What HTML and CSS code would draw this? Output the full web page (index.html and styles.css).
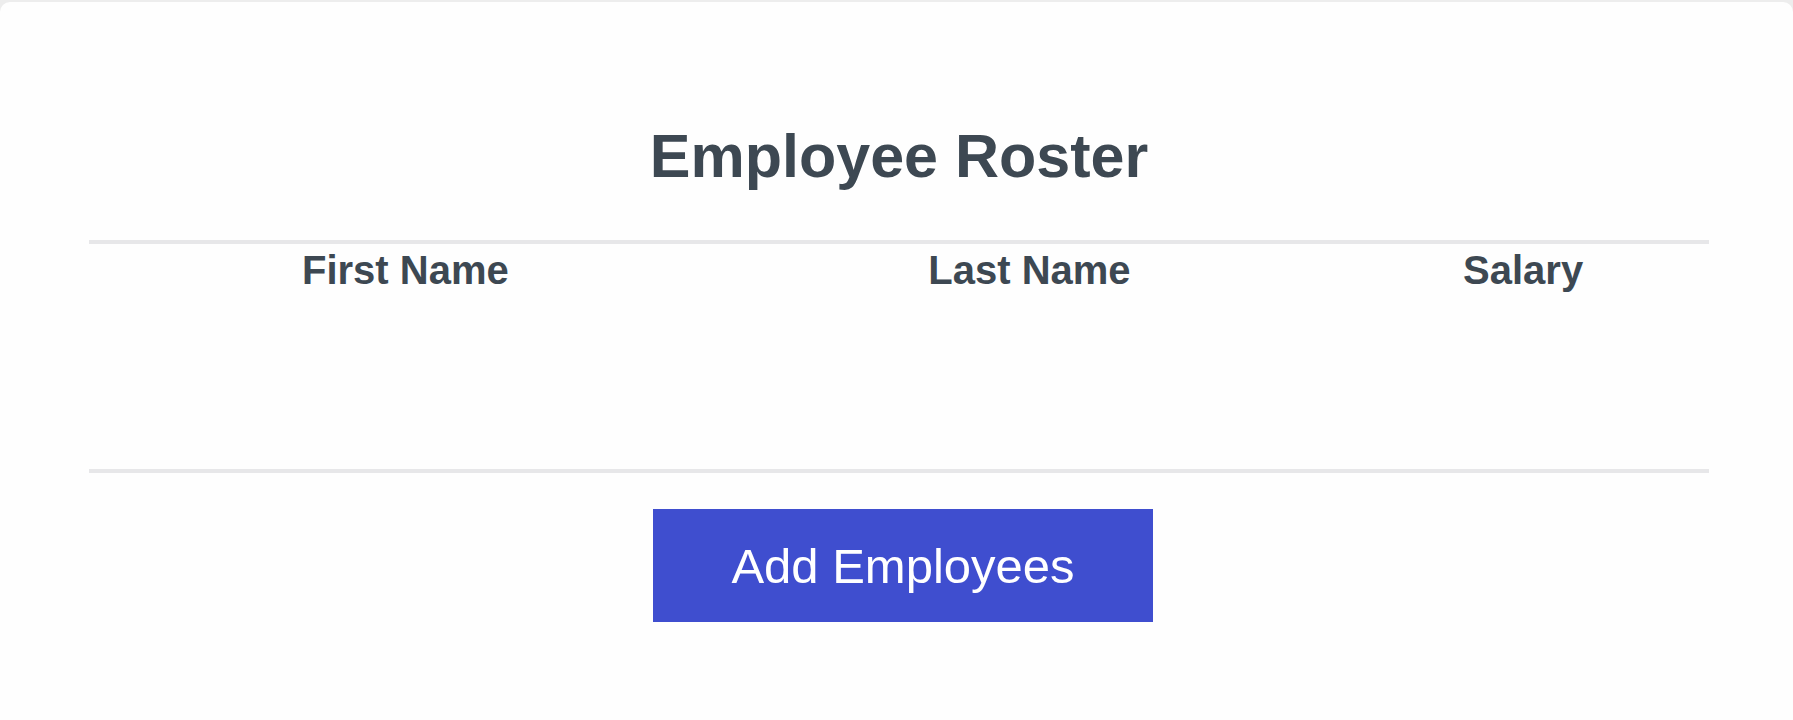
FILE: index.html
```html
<!DOCTYPE html>
<html lang="en">
<head>
<meta charset="utf-8">
<title>Employee Roster</title>
<link rel="stylesheet" href="styles.css">
</head>
<body>
<main class="card">
  <h1 class="title">Employee Roster</h1>
  <section class="roster">
    <table class="roster-table">
      <thead>
        <tr>
          <th>First Name</th>
          <th>Last Name</th>
          <th>Salary</th>
        </tr>
      </thead>
      <tbody></tbody>
    </table>
  </section>
  <div class="actions">
    <button class="add-btn" type="button">Add Employees</button>
  </div>
</main>
</body>
</html>
```

FILE: styles.css
```css
html, body {
  margin: 0;
  padding: 0;
}

body {
  background: #ededed;
  font-family: "Liberation Sans", Arial, sans-serif;
  color: #3d4852;
  height: 720px;
  overflow: hidden;
}

.card {
  margin-top: 2px;
  background: #fefefe;
  border-radius: 10px 10px 0 0;
  min-height: 718px;
  padding: 119px 84px 0 89px;
  box-sizing: border-box;
}

.title {
  margin: 0;
  text-align: center;
  font-size: 61px;
  line-height: 70px;
  font-weight: 700;
  color: #3d4852;
}

.roster {
  margin-top: 49px;
  border-top: 4px solid #e7e7e9;
  border-bottom: 4px solid #e7e7e9;
  height: 225px;
}

.roster-table {
  width: 100%;
  border-spacing: 2px;
}

.roster-table th {
  padding: 1px 1px 0;
  font-size: 40px;
  line-height: 46px;
  font-weight: 700;
  text-align: center;
  color: #3d4852;
}

.actions {
  display: flex;
  justify-content: center;
  margin-top: 36px;
  padding-left: 8px;
}

.add-btn {
  width: 500px;
  height: 113px;
  border: none;
  border-radius: 0;
  background: #3f4ecf;
  color: #ffffff;
  font-family: "Liberation Sans", Arial, sans-serif;
  font-size: 49px;
  line-height: 56px;
  padding: 0;
  cursor: pointer;
}
```
